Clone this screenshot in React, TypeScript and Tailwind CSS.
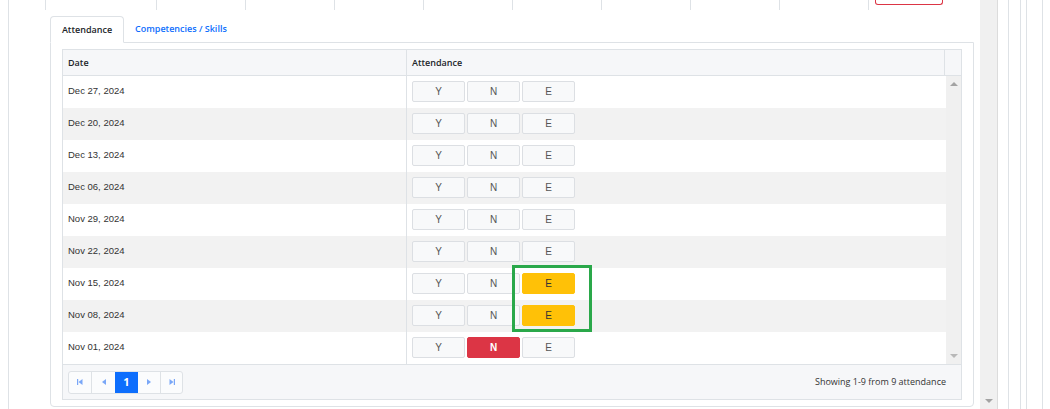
import React from 'react';

type Mark = 'Y' | 'N' | 'E' | null;

interface Row {
  date: string;
  mark: Mark;
}

const rows: Row[] = [
  { date: 'Dec 27, 2024', mark: null },
  { date: 'Dec 20, 2024', mark: null },
  { date: 'Dec 13, 2024', mark: null },
  { date: 'Dec 06, 2024', mark: null },
  { date: 'Nov 29, 2024', mark: null },
  { date: 'Nov 22, 2024', mark: null },
  { date: 'Nov 15, 2024', mark: 'E' },
  { date: 'Nov 08, 2024', mark: 'E' },
  { date: 'Nov 01, 2024', mark: 'N' },
];

const topCells = [111, 89, 89, 89, 89, 89, 89, 89, 89];

const AttendanceButton = ({ label, mark }: { label: 'Y' | 'N' | 'E'; mark: Mark }) => {
  let cls = 'bg-[#f8f9fa] border-[#dcdfe3] text-[#555]';
  if (mark === label && label === 'E') cls = 'bg-[#ffc107] border-[#ffc107] text-[#333]';
  if (mark === label && label === 'N') cls = 'bg-[#dc3545] border-[#dc3545] text-white font-bold';
  if (mark === label && label === 'Y') cls = 'bg-[#198754] border-[#198754] text-white font-bold';
  return (
    <button
      className={`w-[53px] h-[21px] rounded-[2px] border text-[10px] leading-none flex items-center justify-center ${cls}`}
    >
      {label}
    </button>
  );
};

const Tri = ({ dir, color = '#999' }: { dir: 'up' | 'down' | 'left' | 'right'; color?: string }) => {
  const pts = {
    up: '0,4 4,0 8,4',
    down: '0,0 8,0 4,4',
    left: '4,0 4,6 0,3',
    right: '0,0 0,6 4,3',
  }[dir];
  const w = dir === 'up' || dir === 'down' ? 8 : 4;
  const h = dir === 'up' || dir === 'down' ? 4 : 6;
  return (
    <svg width={w} height={h} viewBox={`0 0 ${w} ${h}`}>
      <polygon points={pts} fill={color} />
    </svg>
  );
};

const PageEdge = ({ dir }: { dir: 'first' | 'last' }) => (
  <svg width="6" height="6" viewBox="0 0 6 6">
    {dir === 'first' ? (
      <>
        <rect x="0" y="0" width="1.2" height="6" fill="#7aa7f7" />
        <polygon points="5.5,0 5.5,6 1.5,3" fill="#7aa7f7" />
      </>
    ) : (
      <>
        <polygon points="0.5,0 0.5,6 4.5,3" fill="#7aa7f7" />
        <rect x="4.8" y="0" width="1.2" height="6" fill="#7aa7f7" />
      </>
    )}
  </svg>
);

const App = () => {
  return (
    <div
      className="relative w-[1050px] h-[409px] overflow-hidden bg-white flex text-[#212529]"
      style={{ fontFamily: '"Open Sans", "Liberation Sans", Arial, sans-serif' }}
    >
      {/* main panel */}
      <div className="w-[980px] h-full pl-[8px] shrink-0">
        <div className="h-full border-l border-[#dee2e6] flex flex-col">
          {/* cut-off header strip */}
          <div className="h-[16px] flex items-start">
            <div className="w-[36px] shrink-0" />
            <div className="flex h-[10px]">
              {topCells.map((w, i) => (
                <div key={i} className="h-full border-l border-[#dee2e6]" style={{ width: w }} />
              ))}
              <div className="h-full border-l border-[#dee2e6] w-[7px]" />
            </div>
            <div className="w-[68px] h-[6px] -mt-[1px] border border-t-0 border-[#dc3545] rounded-b-[3px]" />
          </div>

          {/* tabs */}
          <div className="pl-[41px] flex items-end h-[26px]">
            <div className="relative z-10 w-[74px] h-[27px] -mb-px border border-b-white border-[#dee2e6] rounded-t-[4px] bg-white flex items-center justify-center text-[9px] font-semibold text-[#212529]">
              Attendance
            </div>
            <div className="h-[26px] pl-[11px] flex items-center text-[9px] font-semibold text-[#0d6efd]">
              Competencies / Skills
            </div>
          </div>

          {/* card */}
          <div className="ml-[41px] w-[924px] h-[365px] border border-[#dee2e6] rounded-b-[4px] px-[11px] pt-[6px]">
            <div className="border border-[#dee2e6] flex flex-col">
              {/* header */}
              <div className="h-[26px] bg-[#f6f7f9] border-b border-[#dee2e6] flex text-[9px] font-semibold text-[#212529]">
                <div className="w-[344px] pl-[5px] flex items-center border-r border-[#dee2e6]">Date</div>
                <div className="w-[538px] pl-[5px] flex items-center border-r border-[#dee2e6]">Attendance</div>
                <div className="flex-1" />
              </div>
              {/* body */}
              <div className="flex">
                <div className="w-[883px]" style={{ fontFamily: '"Liberation Sans", Arial, sans-serif' }}>
                  {rows.map((r, i) => (
                    <div key={r.date} className={`h-[32px] flex ${i % 2 === 1 ? 'bg-[#f2f2f2]' : 'bg-white'}`}>
                      <div className="w-[344px] pl-[5px] pb-px flex items-center border-r border-[#dee2e6] text-[9.5px] text-[#333]">
                        {r.date}
                      </div>
                      <div className="flex-1 pl-[5px] pb-px flex items-center gap-[2px]">
                        <AttendanceButton label="Y" mark={r.mark} />
                        <AttendanceButton label="N" mark={r.mark} />
                        <AttendanceButton label="E" mark={r.mark} />
                      </div>
                    </div>
                  ))}
                </div>
                <div className="flex-1 bg-[#f0f0f0] flex flex-col items-center justify-between py-[6px]">
                  <Tri dir="up" color="#a3a3a3" />
                  <Tri dir="down" color="#b8b8b8" />
                </div>
              </div>
              {/* footer */}
              <div className="h-[35px] bg-[#f6f7f9] border-t border-[#dee2e6] flex items-center justify-between pl-[5px] pr-[15px]">
                <div className="flex h-[23px] border border-[#dee2e6] rounded-[3px] overflow-hidden bg-[#fbfcfd]">
                  <div className="w-[23px] flex items-center justify-center border-r border-[#dee2e6]">
                    <PageEdge dir="first" />
                  </div>
                  <div className="w-[23px] flex items-center justify-center">
                    <Tri dir="left" color="#7aa7f7" />
                  </div>
                  <div className="w-[23px] flex items-center justify-center bg-[#0d6efd] text-white text-[11px] font-bold">
                    1
                  </div>
                  <div className="w-[23px] flex items-center justify-center border-r border-[#dee2e6]">
                    <Tri dir="right" color="#7aa7f7" />
                  </div>
                  <div className="w-[21px] flex items-center justify-center">
                    <PageEdge dir="last" />
                  </div>
                </div>
                <div className="text-[9px] text-[#333]">Showing 1-9 from 9 attendance</div>
              </div>
            </div>
          </div>
        </div>
      </div>

      {/* page scrollbar */}
      <div className="w-[18px] h-full bg-[#f0f0f0] border-r border-[#dcdcdc] flex flex-col justify-end items-center pb-[6px]">
        <Tri dir="down" color="#a3a3a3" />
      </div>

      {/* right strip */}
      <div className="flex h-full">
        <div className="w-[10px]" />
        <div className="w-[12px] border-l border-[#dee2e6]" />
        <div className="w-[6px] border-l border-[#dee2e6]" />
        <div className="w-[16px] border-l border-[#dee2e6]" />
        <div className="w-[8px] border-l border-[#dee2e6]" />
      </div>

      {/* highlight annotation */}
      <div className="absolute left-[512px] top-[265px] w-[80px] h-[67px] border-[3px] border-[#2aa84a]" />
    </div>
  );
};

export default App;
